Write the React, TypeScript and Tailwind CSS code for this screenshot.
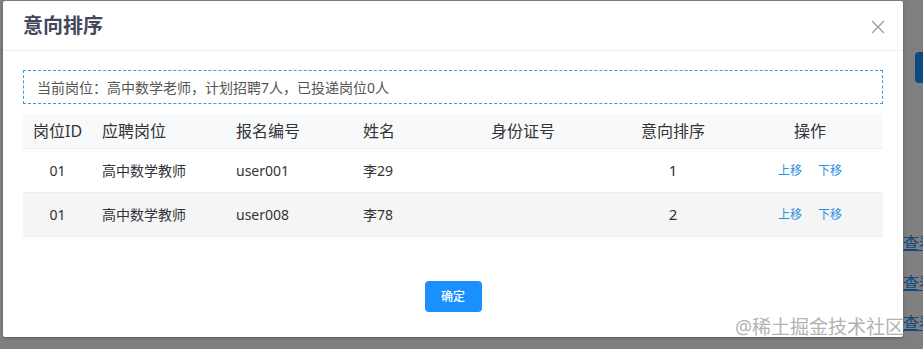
import React from "react";

const rows = [
  { id: "01", job: "高中数学教师", no: "user001", name: "李29", card: "", rank: 1 },
  { id: "01", job: "高中数学教师", no: "user008", name: "李78", rank: 2, card: "" },
];

const cols = "grid grid-cols-[69px_134px_127px_100px_140px_160px_114px_1fr]";

export default function App() {
  return (
    <div
      className="relative w-[923px] h-[349px] overflow-hidden bg-[#7f7f7f]"
      style={{ fontFamily: '"Noto Sans", "Noto Sans CJK SC", sans-serif' }}
    >
      {/* page behind the overlay */}
      <div className="absolute left-[915px] top-[52px] w-[20px] h-[31px] rounded-[4px] bg-[#0c4a82]" />
      <div className="absolute left-[903px] top-[235px] flex flex-col gap-[24px] whitespace-nowrap text-[16px] leading-[16px] text-[#0c4a82] underline">
        <span>查看</span>
        <span>查看</span>
        <span>查看</span>
      </div>

      {/* dialog */}
      <div className="absolute left-[3px] top-[1px] w-[900px] h-[336px] rounded-[2px] bg-white shadow-[0_1px_3px_rgba(0,0,0,0.3)] flex flex-col">
        <div className="h-[50px] flex items-center justify-between pl-[20px] pr-[18px] border-b border-[#ebeef5]">
          <span className="text-[20px] font-bold text-[#44475a] leading-none">意向排序</span>
          <svg width="14" height="14" viewBox="0 0 14 14" className="mt-[2px]">
            <path d="M1 1L13 13M13 1L1 13" stroke="#9a9ba0" strokeWidth="1.3" />
          </svg>
        </div>

        <div className="px-[20px] pt-[19px]">
          <div className="h-[34px] flex items-center pl-[13px] border border-dashed border-[#3c9bd6] text-[14px] text-[#555]">
            当前岗位：高中数学老师，计划招聘7人，已投递岗位0人
          </div>

          <div className="mt-[10px] text-[#333]">
            <div className={`${cols} h-[35px] items-center bg-[#f8f9fb] border-b border-[#ebeef5] text-[16px]`}>
              <span className="pl-[10px]">岗位ID</span>
              <span className="pl-[10px]">应聘岗位</span>
              <span className="pl-[10px]">报名编号</span>
              <span className="pl-[10px]">姓名</span>
              <span className="text-center">身份证号</span>
              <span className="text-center">意向排序</span>
              <span className="text-center">操作</span>
              <span />
            </div>
            {rows.map((r, i) => (
              <div
                key={i}
                className={`${cols} h-[44px] items-center border-b border-[#ebeef5] text-[14px] ${i % 2 ? "bg-[#f5f5f5]" : "bg-white"}`}
              >
                <span className="text-center">{r.id}</span>
                <span className="pl-[10px]">{r.job}</span>
                <span className="pl-[10px]">{r.no}</span>
                <span className="pl-[10px]">{r.name}</span>
                <span className="text-center">{r.card}</span>
                <span className="text-center text-[15px]">{r.rank}</span>
                <span className="flex justify-center gap-[16px] text-[12px] text-[#2b8fe0]">
                  <span>上移</span>
                  <span>下移</span>
                </span>
                <span />
              </div>
            ))}
          </div>
        </div>

        <div className="flex justify-center mt-[44px]">
          <button className="w-[57px] h-[31px] rounded-[4px] bg-[#1a90ff] text-white text-[12px] font-medium">
            确定
          </button>
        </div>
      </div>

      {/* watermark */}
      <div className="absolute left-[735px] top-[316px] text-[19px] leading-[22px] text-[#a8a8a8]/90">
        @稀土掘金技术社区
      </div>
    </div>
  );
}
